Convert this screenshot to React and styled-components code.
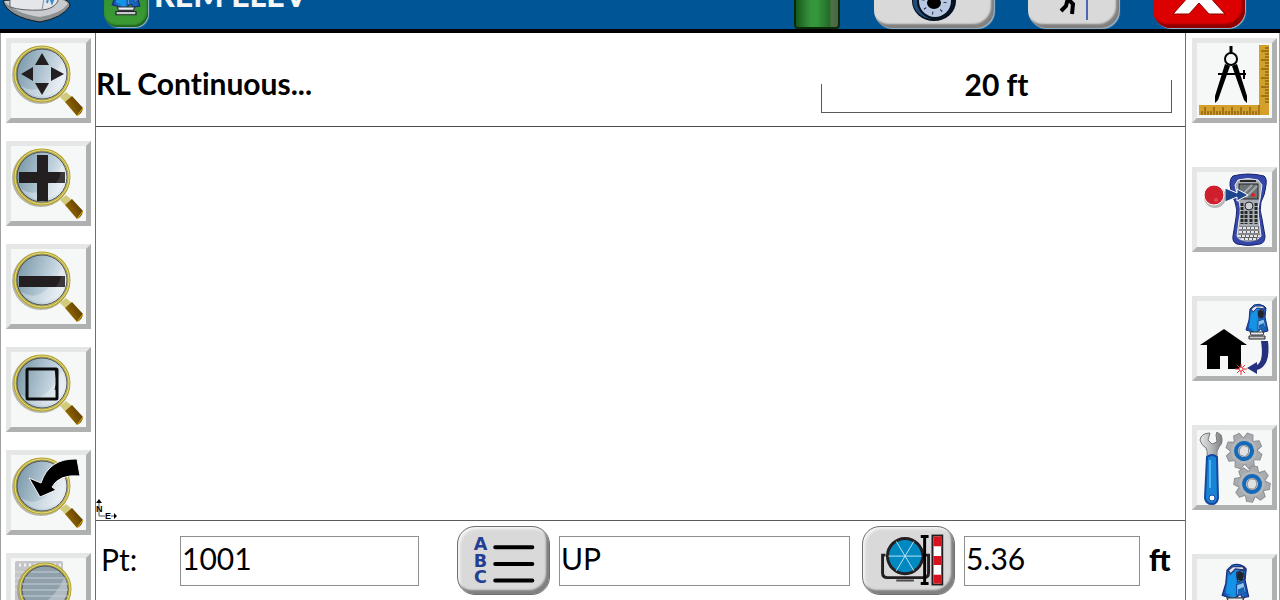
import React from 'react';
import styled, { createGlobalStyle } from 'styled-components';

// --- STYLED COMPONENTS ---

const GlobalStyle = createGlobalStyle`
  * {
    box-sizing: border-box;
  }

  body {
    margin: 0;
    background: #ffffff;
    font-family: Lato, 'Open Sans', sans-serif;
    color: #000000;
  }

  svg {
    display: block;
  }
`;

const Page = styled.div`
  display: flex;
  flex-direction: column;
  height: 100vh;
  overflow: hidden;
`;

const TopBar = styled.header`
  display: flex;
  align-items: flex-end;
  flex: none;
  height: 60px;
  margin-top: -27px;
  padding-right: 35px;
  background: #005596;
  border-bottom: 4px solid #000000;
`;

const Badge = styled.div`
  display: flex;
  justify-content: center;
  width: 44px;
  height: 54px;
  margin: 0 6px 2px 32px;
  padding-top: 2px;
  border-radius: 14px;
  background: linear-gradient(#2c8a2c, #3d9c35);
  box-shadow: inset -1px -2px 2px #1c5f1c, 1px 1px 1px #9db8cc;
`;

const Title = styled.h1`
  flex: 1;
  margin: 0;
  padding-bottom: 14px;
  font-size: 32px;
  line-height: 40px;
  font-weight: 900;
  color: #f4f6f8;
  white-space: nowrap;
`;

const Battery = styled.div`
  width: 46px;
  height: 56px;
  border: 2px solid #0a2a0a;
  border-radius: 4px;
  background: linear-gradient(90deg, #17591b, #35963c 35%, #35963c 50%, #236b27 80%, #4d6f4a 84%, #45683f);
`;

const TopActions = styled.div`
  display: flex;
  align-items: flex-end;
  gap: 34px;
`;

const PlateButton = styled.button`
  display: flex;
  align-items: center;
  justify-content: center;
  flex: none;
  width: ${(props) => props.$width}px;
  height: ${(props) => props.$height}px;
  margin: 0;
  padding: 0;
  border: 1px solid #6f6f6f;
  border-radius: 18px;
  background: ${(props) => props.$color || '#d9d9d9'};
  box-shadow: inset -3px -4px 2px ${(props) => props.$shade || '#808080'}, inset 2px 2px 3px #f6f6f6;
  overflow: hidden;
`;

const TopButton = styled(PlateButton)`
  margin-bottom: 1px;
  border: 0;
  box-shadow: inset -3px -4px 2px ${(props) => props.$shade || '#808080'}, 1px 1px 1px #9db8cc;
`;

const Main = styled.main`
  display: flex;
  flex: 1;
  min-height: 0;
  border-left: 1px solid #a0a0a0;
  border-right: 1px solid #a0a0a0;
`;

const ToolColumn = styled.nav`
  display: flex;
  flex-direction: column;
  flex: none;
  gap: ${(props) => props.$gap}px;
  padding: 5px ${(props) => props.$right}px 0 ${(props) => props.$left}px;
`;

const ToolTile = styled.button`
  flex: none;
  width: 85px;
  height: 85px;
  padding: 0;
  border: 5px solid;
  border-color: #e5e7e7 #aeb1b0 #aeb1b0 #e5e7e7;
  background: #f6f7f7;
`;

const Workspace = styled.section`
  display: flex;
  flex-direction: column;
  flex: 1;
  min-width: 0;
  border-left: 1px solid #6e6e6e;
  border-right: 1px solid #6e6e6e;
`;

const StatusRow = styled.div`
  display: flex;
  align-items: center;
  justify-content: space-between;
  height: 94px;
  padding: 6px 13px 0 0;
  border-bottom: 1px solid #4a4a4a;
`;

const StatusText = styled.p`
  margin: 0;
  font-size: 30px;
  line-height: 36px;
  font-weight: 700;
  font-variant-ligatures: none;
`;

const ScaleBar = styled.div`
  width: 351px;
  height: 60px;
  padding-top: 13px;
  border-bottom: 1px solid #5a5a5a;
  background:
    linear-gradient(#5a5a5a, #5a5a5a) left bottom / 1px 28px no-repeat,
    linear-gradient(#5a5a5a, #5a5a5a) right bottom / 1px 32px no-repeat;
  text-align: center;
`;

const MapArea = styled.div`
  display: flex;
  align-items: flex-end;
  flex: 1;
  min-height: 0;
  border-bottom: 1px solid #5a5a5a;
`;

const PointForm = styled.form`
  display: flex;
  align-items: center;
  flex: none;
  height: 79px;
  padding: 0 5px;
`;

const Label = styled.label`
  width: ${(props) => props.$width}px;
  flex: none;
  padding-bottom: 4px;
  font-size: 30px;
  line-height: 36px;
  font-weight: ${(props) => (props.$bold ? 900 : 400)};
`;

const Field = styled.input`
  flex: ${(props) => props.$grow} 1 0;
  min-width: 0;
  height: 50px;
  margin: 0 ${(props) => props.$after}px 0 ${(props) => props.$before}px;
  padding: 0 1px 5px;
  border: 1px solid #909090;
  border-radius: 0;
  background: #ffffff;
  font-family: inherit;
  font-size: 30px;
  color: #000000;
`;

// --- ICONS ---

const TileSvg = ({ children }) => (
  <svg width="75" height="75" viewBox="0 0 75 75" aria-hidden="true">
    {children}
  </svg>
);

const DefsSvg = styled.svg`
  position: absolute;
`;

const SharedGradients = () => (
  <DefsSvg width="0" height="0" aria-hidden="true">
    <defs>
      <linearGradient id="lens" x1="0" y1="0.3" x2="1" y2="0.6">
        <stop offset="0" stopColor="#7896a7" />
        <stop offset="0.5" stopColor="#b0c4d1" />
        <stop offset="1" stopColor="#eef4f8" />
      </linearGradient>
      <linearGradient id="grip" x1="0" y1="1" x2="1" y2="0.4">
        <stop offset="0" stopColor="#d0a52a" />
        <stop offset="0.4" stopColor="#8a6000" />
        <stop offset="1" stopColor="#5b3a00" />
      </linearGradient>
      <linearGradient id="stationBlue" x1="0" y1="0" x2="1" y2="0">
        <stop offset="0" stopColor="#1d3fa0" />
        <stop offset="0.4" stopColor="#1697e0" />
        <stop offset="1" stopColor="#1650b0" />
      </linearGradient>
      <linearGradient id="metal" x1="0" y1="0" x2="1" y2="0">
        <stop offset="0" stopColor="#e6e6e6" />
        <stop offset="0.5" stopColor="#b7b9bb" />
        <stop offset="1" stopColor="#7c7e80" />
      </linearGradient>
    </defs>
  </DefsSvg>
);

const Magnifier = ({ cx = 31, r = 27, fill = 'url(#lens)', behind, children }) => (
  <TileSvg>
    {behind}
    <path d="M49 54 L55 49 L61 54 L55 60 Z" fill="#d3cb7c" />
    <path d="M54 59 L61 53 L72 65 Q71 71 66 73 Z" fill="url(#grip)" />
    <path d="M66 73 L72 65" stroke="#d9b400" strokeWidth="1" />
    <circle cx={cx - 1} cy="32" r={r + 1} fill="none" stroke="#8b8b7a" strokeWidth="2" opacity="0.6" />
    <circle cx={cx} cy="31" r={r} fill={fill} stroke="#b3a32c" strokeWidth="3" />
    <circle cx={cx} cy="31" r={r} fill="none" stroke="#e6de8c" strokeWidth="1" />
    <circle cx={cx} cy="31" r={r - 2} fill="none" stroke="#4f5253" strokeWidth="1" />
    <path d={`M${cx - 22} 42 Q${cx} 58 ${cx + 20} 19 Q${cx + 27} 33 ${cx + 15} 48 Q${cx - 7} 62 ${cx - 22} 42 Z`} fill="#ffffff" opacity="0.3" />
    {children}
  </TileSvg>
);

const PanIcon = () => (
  <Magnifier>
    <path d="M24 22 L31 10 L38 22 Z M24 40 L38 40 L31 52 Z M22 24 L22 38 L10 31 Z M40 24 L40 38 L53 31 Z" fill="#231f20" />
  </Magnifier>
);

const ZoomInIcon = () => (
  <Magnifier>
    <path d="M26 9 H37 V26 H54 V37 H37 V55 H26 V37 H8 V26 H26 Z" fill="#231f20" />
    <path d="M50 26 H54 V37 H45 Q49 32 50 26 Z" fill="#3c393a" />
  </Magnifier>
);

const ZoomOutIcon = () => (
  <Magnifier>
    <rect x="8" y="27" width="46" height="11" fill="#231f20" />
    <path d="M50 27 H54 V38 H45 Q49 33 50 27 Z" fill="#3c393a" />
  </Magnifier>
);

const ZoomWindowIcon = () => (
  <Magnifier>
    <rect x="16" y="17" width="30" height="30" rx="1" fill="none" stroke="#0b0b0b" strokeWidth="3" />
    <path d="M44 17 L46 30 L44 38" fill="none" stroke="#0b0b0b" strokeWidth="1" />
  </Magnifier>
);

const ZoomPreviousIcon = () => (
  <Magnifier>
    <path d="M18 23 L30 28 Q38 3 66 4 L69 21 Q48 19 41 32 L45 35 L29 42 Z" fill="#000000" stroke="#f2f5f7" strokeWidth="1" />
  </Magnifier>
);

const ZoomLayerIcon = () => (
  <Magnifier
    cx={34}
    r={25}
    fill="#8fa0ab"
    behind={
      <g>
        <rect x="4" y="3" width="48" height="70" rx="2" fill="#c3c5c8" />
        <path d="M8 7 H50" stroke="#f2f2f2" strokeWidth="3" strokeDasharray="2 3" />
        <path d="M4 14 H52 M4 20 H52 M4 26 H52 M4 32 H52" stroke="#dcdddf" strokeWidth="1" />
      </g>
    }
  >
    <path d="M20 14 H48 M14 20 H54 M11 26 H57 M11 32 H57 M11 38 H57" stroke="#c4ced5" strokeWidth="1" />
  </Magnifier>
);

const rulerTicks = [5, 8, 11, 14, 17, 20, 23, 26, 29, 32, 35, 38, 41, 44, 47, 50, 53, 56, 59];

const CompassIcon = () => (
  <TileSvg>
    <path d="M62 2 H72 V72 H2 V62 H62 Z" fill="#d49f2a" />
    <path d="M62 62 V72" stroke="#7a5200" />
    {rulerTicks.map((t, i) => (
      <path
        key={t}
        d={`M${t} 72 V${i % 3 === 1 ? 64 : 68} M72 ${t} H${i % 3 === 1 ? 64 : 68}`}
        stroke="#6b4a08"
        strokeWidth="1"
      />
    ))}
    <path d="M34 3 V10" stroke="#000" strokeWidth="3" />
    <circle cx="34" cy="16" r="6" fill="#f6f7f7" stroke="#000" strokeWidth="2" />
    <path d="M28 21 L33 23 L21 57 L18 60 L18 53 Z M40 21 L35 23 L47 57 L50 60 L50 53 Z" fill="#000" />
    <path d="M21 31 H49 M47 27 V36" stroke="#000" strokeWidth="2" />
  </TileSvg>
);

const CollectorIcon = () => (
  <TileSvg>
    <path
      d="M36 4 Q51 0 67 4 Q70 6 69 13 Q68 23 64 30 Q62 38 65 47 L68 64 Q68 71 63 72 Q51 75 40 72 Q35 70 36 64 L39 46 Q41 38 38 30 Q34 23 33 13 Q33 6 36 4 Z"
      fill="#3446a8"
      stroke="#17226c"
      strokeWidth="1"
    />
    <path
      d="M41 8 Q51 5 61 8 L65 13 L63 27 Q60 36 62 48 L64 64 Q61 69 51 69 Q42 69 40 64 L42 48 Q45 36 41 27 L38 13 Z"
      fill="#a9adb2"
      stroke="#e9ebed"
      strokeWidth="1"
    />
    <rect x="43" y="8" width="16" height="2" fill="#27272c" />
    <rect x="42" y="12" width="19" height="15" fill="#6d7275" stroke="#26282b" />
    <path d="M44 24 L55 13 M49 25 L60 14" stroke="#a2a8ab" strokeWidth="2" />
    <path d="M45 31 V52 M49 39 V52 M54 39 V52 M59 31 V52" stroke="#26282b" strokeWidth="3" strokeDasharray="3 1" />
    <circle cx="52" cy="34" r="4" fill="#c9ccd0" stroke="#26282b" strokeWidth="1" />
    <path d="M42 56 H62 M42 60 H62 M41 64 H63 M44 67 H60" stroke="#5d6165" strokeWidth="3" />
    <path d="M42 56 H62 M42 60 H62 M41 64 H63 M44 67 H60" stroke="#e4e6e8" strokeWidth="2" strokeDasharray="3 1" />
    <path d="M28 16 L40 21 L40 17 L51 23 L40 29 L40 25 L28 30 Z" fill="#1d468c" stroke="#fff" strokeWidth="1" />
    <circle cx="56" cy="23" r="2" fill="#e0202a" />
    <circle cx="18" cy="25" r="11" fill="#8d8d8d" opacity="0.6" />
    <circle cx="17" cy="23" r="10" fill="#d01f2c" stroke="#fff" strokeWidth="1" />
    <circle cx="19" cy="28" r="2" fill="#e0454f" />
  </TileSvg>
);

// Total station head, drawn on a 24 x 38 grid
const Station = () => (
  <g>
    <path
      d="M5 6 L9 2 Q14 0 19 3 L21 5 L20 14 L23 28 L18 29 L16 26 L11 30 L1 27 L4 17 Z"
      fill="url(#stationBlue)"
      stroke="#1a2b7c"
      strokeWidth="1"
    />
    <path d="M6 6 L10 3 L18 3 L20 6 L12 5 L8 9 Z" fill="#dfe3ea" stroke="#26357c" strokeWidth="1" />
    <path d="M6 11 L12 9 L11 27 L4 25 Z" fill="#1593e6" />
    <path d="M13 8 L18 6 L20 13 L14 16 Z" fill="#a9c9e6" stroke="#1b2d6e" />
    <ellipse cx="16" cy="11" rx="3" ry="4" fill="#20242c" />
    <path d="M13 18 L19 16 L21 24 L13 27 Z" fill="#8fc7ec" stroke="#1b4fa3" />
    <path d="M14 22 L19 20 L20 24 L14 26 Z" fill="#1464b8" />
    <path d="M5 29 H19 L18 32 H6 Z" fill="#e8eaec" stroke="#33363c" strokeWidth="1" />
    <path d="M4 33 H20 V36 H4 Z" fill="#c7c9cc" stroke="#25272b" strokeWidth="1" />
  </g>
);

const HomeStationIcon = () => (
  <TileSvg>
    <path d="M27 28 L50 44 H44 V68 H31 V55 H23 V68 H10 V44 H3 Z" fill="#000" />
    <g transform="translate(48 2)">
      <Station />
    </g>
    <path d="M64 40 H71 Q74 65 60 69 L60 73 L50 67 L60 61 L60 64 Q67 60 64 40 Z" fill="#25317e" />
    <path d="M44 63 V74 M38 68 H50 M40 64 L48 72 M48 64 L40 72" stroke="#e2323b" strokeWidth="1" />
    <circle cx="44" cy="68" r="2" fill="#f6f7f7" stroke="#e2323b" />
  </TileSvg>
);

const gearAngles = [0, 45, 90, 135, 180, 225, 270, 315];

const Gear = ({ x, y, turn }) => (
  <g transform={`translate(${x} ${y}) rotate(${turn})`}>
    {gearAngles.map((a) => (
      <path key={a} d="M-5 -12 L-3 -18 H3 L5 -12 Z" fill="#a9acaf" stroke="#8b8e92" strokeWidth="1" transform={`rotate(${a})`} />
    ))}
    <circle r="13" fill="#b3b6b9" />
    <circle r="8" fill="#cfd1d4" stroke="#1469b8" strokeWidth="4" />
    <path d="M-5 0 L-3 -5 H3 L5 0 L3 5 H-3 Z" fill="#dfe1e3" stroke="#8b8e91" strokeWidth="1" />
  </g>
);

const SettingsIcon = () => (
  <TileSvg>
    <path
      d="M13 3 Q4 3 3 10 Q4 15 9 18 Q11 21 10 27 H20 Q19 21 22 17 Q27 12 24 5 L20 2 L19 5 L20 12 L15 14 L11 10 Z"
      fill="url(#metal)"
      stroke="#77797b"
      strokeWidth="1"
    />
    <path d="M10 27 Q15 23 20 27 L21 68 Q20 74 15 74 Q9 74 8 68 Z" fill="#1784d6" stroke="#1747a0" strokeWidth="2" />
    <path d="M13 30 V58" stroke="#4bb4f2" strokeWidth="2" />
    <circle cx="15" cy="68" r="3" fill="#f4f6f7" stroke="#1747a0" />
    <Gear x={47} y={21} turn={20} />
    <Gear x={55} y={54} turn={8} />
  </TileSvg>
);

const StationIcon = () => (
  <TileSvg>
    <g transform="translate(24 4) scale(1.2)">
      <Station />
    </g>
  </TileSvg>
);

const HardHatIcon = () => (
  <svg width="72" height="56" viewBox="0 0 72 56" aria-hidden="true">
    <path d="M3 28 Q8 44 40 49 Q62 45 70 33 Q70 27 60 25 Z" fill="#8e9194" stroke="#16181a" strokeWidth="1" />
    <path d="M4 28 Q14 40 40 44 Q60 41 68 31 Q66 27 58 26 Z" fill="#c9cbce" />
    <path d="M10 34 Q8 10 30 6 Q56 6 58 28 Q54 36 42 37 Q22 38 10 34 Z" fill="#e4e6e9" stroke="#5a5d60" strokeWidth="1" />
    <path d="M42 37 L45 20" stroke="#8b8e91" strokeWidth="1" />
    <path d="M47 30 L49 22 L52 30 L55 22" fill="none" stroke="#3b8bc8" strokeWidth="2" />
  </svg>
);

const EyeIcon = () => (
  <svg width="48" height="56" viewBox="0 0 48 56" aria-hidden="true">
    <ellipse cx="24" cy="28" rx="22" ry="20" fill="#06101f" />
    <ellipse cx="23" cy="28" rx="20" ry="18" fill="#1f4c7a" />
    <ellipse cx="25" cy="28" rx="18" ry="18" fill="#06101f" />
    <ellipse cx="25" cy="28" rx="16" ry="16" fill="#b9c8e2" />
    <circle cx="24" cy="29" r="11" fill="none" stroke="#1a2740" strokeWidth="3" strokeDasharray="1 8" />
    <ellipse cx="24" cy="30" rx="7" ry="6" fill="#000" />
  </svg>
);

const WalkerIcon = () => (
  <svg width="40" height="56" viewBox="0 0 40 56" aria-hidden="true">
    <circle cx="16" cy="6" r="4" fill="#000" />
    <path d="M16 12 L13 25 L19 31 L18 41 M14 25 L12 33 L7 38 M15 15 L8 22 M16 15 L22 21" fill="none" stroke="#000" strokeWidth="4" />
    <path d="M33 4 V47" stroke="#4a67b5" strokeWidth="2" />
  </svg>
);

const CloseIcon = () => (
  <svg width="56" height="56" viewBox="0 0 56 56" aria-hidden="true">
    <path d="M2 0 H17 L28 15 L39 0 H54 L37 22 L54 41 H38 L28 30 L18 41 H2 L19 22 Z" fill="#ffffff" stroke="#8f0000" strokeWidth="1" />
  </svg>
);

const CodeListIcon = () => (
  <svg width="93" height="69" viewBox="0 0 93 69" aria-hidden="true">
    <g fill="#233f94" fontFamily="DejaVu Sans, sans-serif" fontSize="18" fontWeight="700" textAnchor="middle">
      <text x="23" y="24">A</text>
      <text x="23" y="41">B</text>
      <text x="23" y="58">C</text>
    </g>
    <path d="M38 21 H76 M38 38 H76 M38 55 H76" stroke="#000" strokeWidth="4" strokeLinecap="round" />
  </svg>
);

const PrismIcon = () => (
  <svg width="93" height="69" viewBox="0 0 93 69" aria-hidden="true">
    <path d="M23 29 H20 V47 Q20 52 25 52 H62 Q67 52 67 47 V29 H63" fill="none" stroke="#231f20" strokeWidth="3" />
    <path d="M34 55 H52" stroke="#4a4a4a" strokeWidth="2" />
    <circle cx="43" cy="30" r="18" fill="#0089c0" stroke="#231f20" strokeWidth="3" />
    <path d="M26 30 H60 M34 15 L52 45 M52 15 L34 45" stroke="#bfe3f5" strokeWidth="1" />
    <path d="M63 10 V58 M59 10 H67 M59 58 H67" stroke="#000" strokeWidth="3" />
    <rect x="71" y="9" width="10" height="50" fill="#ffffff" stroke="#231f20" strokeWidth="2" />
    <path d="M72 10 H80 V20 H72 Z M72 30 H80 V39 H72 Z M72 49 H80 V58 H72 Z" fill="#d8121e" />
  </svg>
);

// --- PAGE ---

const leftTools = [
  { name: 'Pan', Icon: PanIcon },
  { name: 'Zoom in', Icon: ZoomInIcon },
  { name: 'Zoom out', Icon: ZoomOutIcon },
  { name: 'Zoom window', Icon: ZoomWindowIcon },
  { name: 'Zoom previous', Icon: ZoomPreviousIcon },
  { name: 'Zoom layer', Icon: ZoomLayerIcon },
];

const rightTools = [
  { name: 'Measure', Icon: CompassIcon },
  { name: 'Store point', Icon: CollectorIcon },
  { name: 'Home station', Icon: HomeStationIcon },
  { name: 'Settings', Icon: SettingsIcon },
  { name: 'Instrument', Icon: StationIcon },
];

const Tools = ({ items, ...rest }) => (
  <ToolColumn {...rest}>
    {items.map(({ name, Icon }) => (
      <ToolTile key={name} type="button" aria-label={name}>
        <Icon />
      </ToolTile>
    ))}
  </ToolColumn>
);

const App = () => (
  <Page>
    <GlobalStyle />
    <SharedGradients />
    <TopBar>
      <HardHatIcon />
      <Badge>
        <svg width="30" height="42" viewBox="0 0 24 38" preserveAspectRatio="none" aria-hidden="true">
          <Station />
        </svg>
      </Badge>
      <Title>REM ELEV</Title>
      <TopActions>
        <Battery />
        <TopButton type="button" aria-label="View" $width={120} $height={54}>
          <EyeIcon />
        </TopButton>
        <TopButton type="button" aria-label="Stakeout" $width={91} $height={54}>
          <WalkerIcon />
        </TopButton>
        <TopButton type="button" aria-label="Close" $width={92} $height={54} $color="#dd0000" $shade="#8f0000">
          <CloseIcon />
        </TopButton>
      </TopActions>
    </TopBar>

    <Main>
      <Tools items={leftTools} $gap={18} $left={5} $right={4} />

      <Workspace>
        <StatusRow>
          <StatusText>RL Continuous...</StatusText>
          <ScaleBar>
            <StatusText>20 ft</StatusText>
          </ScaleBar>
        </StatusRow>

        <MapArea>
          <svg width="22" height="21" viewBox="0 0 22 21" aria-hidden="true">
            <path d="M3 2 V17 H9 M15 17 H20" fill="none" stroke="#555" />
            <path d="M3 0 L6 4 H0 Z M21 17 L18 14 V20 Z" fill="#000" />
            <g fontFamily="Liberation Sans, sans-serif" fontSize="9" fontWeight="700">
              <text x="0" y="13">N</text>
              <text x="9" y="20">E</text>
            </g>
          </svg>
        </MapArea>

        <PointForm>
          <Label htmlFor="point" $width={79}>Pt:</Label>
          <Field id="point" defaultValue="1001" $grow={239} $before={0} $after={38} />
          <PlateButton type="button" aria-label="Code list" $width={93} $height={69}>
            <CodeListIcon />
          </PlateButton>
          <Field aria-label="Description" defaultValue="UP" $grow={292} $before={9} $after={12} />
          <PlateButton type="button" aria-label="Prism height" $width={93} $height={69}>
            <PrismIcon />
          </PlateButton>
          <Field id="height" defaultValue="5.36" $grow={175} $before={9} $after={9} />
          <Label htmlFor="height" $width={31} $bold>ft</Label>
        </PointForm>
      </Workspace>

      <Tools items={rightTools} $gap={44} $left={6} $right={2} />
    </Main>
  </Page>
);

export default App;
